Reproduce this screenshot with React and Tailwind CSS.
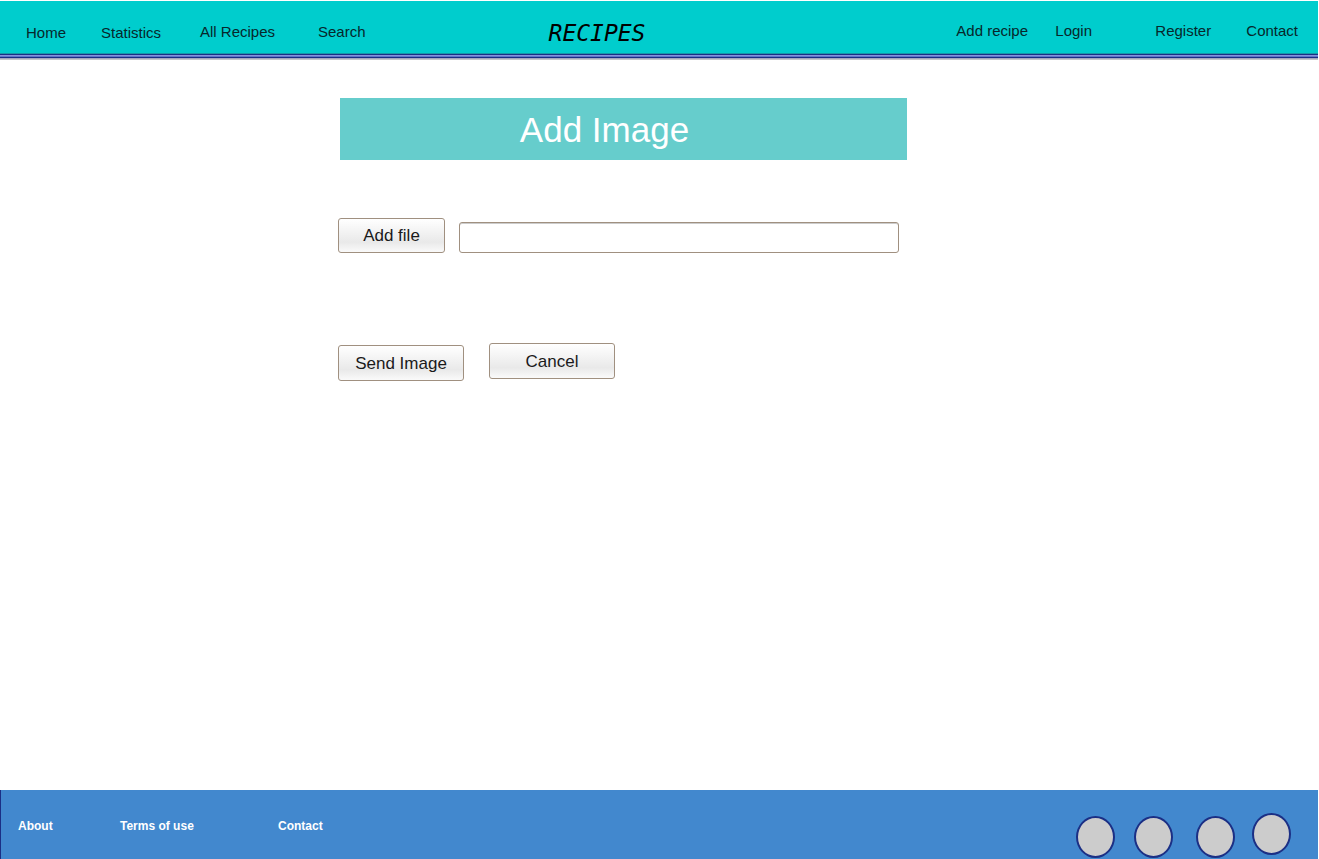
const font = '[font-family:"Liberation_Sans",Arial,sans-serif]';

const button =
  'rounded-[3px] border border-[#a09080] bg-linear-to-b from-white via-[#e9e9e9] via-70% to-[#fafafa] text-[17px] leading-5 text-[#1a1a1a]';

const circle =
  'block h-[42px] w-[39px] rounded-[50%] border-2 border-[#1b2f85] bg-[#cccccc]';

function Header() {
  return (
    <header className="mt-px pr-px">
      <div className="flex h-[52px] bg-[#00cdcd] text-[15px] leading-5 text-[#07272b]">
        <nav aria-label="Main" className="flex flex-1 items-start pt-[21px] pl-[26px]">
          <a href="#home" className="mt-px w-[75px]">Home</a>
          <a href="#statistics" className="mt-px w-[99px]">Statistics</a>
          <a href="#recipes" className="w-[118px]">All Recipes</a>
          <a href="#search">Search</a>
        </nav>
        <a
          href="#home"
          className='pt-[18px] pr-[130px] text-[23px] leading-7 text-black italic [font-family:"DejaVu_Sans_Mono",monospace]'
        >
          RECIPES
        </a>
        <nav aria-label="Account" className="flex flex-1 items-start justify-end pt-5 pr-5">
          <a href="#add" className="w-[99px]">Add recipe</a>
          <a href="#login" className="w-[100px]">Login</a>
          <a href="#register" className="w-[91px]">Register</a>
          <a href="#contact">Contact</a>
        </nav>
      </div>
      <div className="h-px bg-[#1599a8]" />
      <div className="h-px bg-[#1b2f85]" />
      <div className="h-px bg-[#8593dc]" />
      <div className="h-px bg-[#6076c8]" />
      <div className="h-px bg-[#1b2f85]" />
      <div className="h-px bg-[#a3a5bd]" />
      <div className="h-px bg-[#c4c6c8]" />
    </header>
  );
}

function Footer() {
  return (
    <footer className="mr-px flex h-[69px] justify-between border-l border-[#1b2f85] bg-[#4288ce]">
      <nav aria-label="Footer" className="flex pt-[26px] pl-[17px] text-xs leading-5 font-bold text-white">
        <a href="#about" className="w-[102px]">About</a>
        <a href="#terms" className="w-[158px]">Terms of use</a>
        <a href="#contact">Contact</a>
      </nav>
      <div className="flex items-start pt-[23px] pr-[27px]">
        <a href="#social-1" aria-label="Social link 1" className={`${circle} mt-[3px] mr-[19px]`} />
        <a href="#social-2" aria-label="Social link 2" className={`${circle} mt-[3px] mr-[23px]`} />
        <a href="#social-3" aria-label="Social link 3" className={`${circle} mt-[3px] mr-[17px]`} />
        <a href="#social-4" aria-label="Social link 4" className={circle} />
      </div>
    </footer>
  );
}

export default function App() {
  return (
    <div className={`${font} flex min-h-screen flex-col bg-white`}>
      <Header />
      <main className="flex flex-1 justify-center pt-[38px] pr-[74px]">
        <div className="w-[569px]">
          <h1 className="ml-0.5 h-[62px] bg-[#66cdcc] pr-[38px] text-center text-[35px] leading-[64px] text-white">
            Add Image
          </h1>
          <form onSubmit={(e) => e.preventDefault()}>
            <div className="mt-[58px] flex items-start">
              <button type="button" className={`${button} h-[35px] w-[107px]`}>Add file</button>
              <input
                type="text"
                aria-label="File"
                className="mt-1 ml-3.5 h-[31px] w-[440px] rounded-[3px] border border-[#a09080] px-2 text-[17px] inset-shadow-2xs inset-shadow-black/20"
              />
            </div>
            <div className="mt-[90px] flex items-start">
              <button type="submit" className={`${button} mt-0.5 h-9 w-[126px] pt-0.5`}>Send Image</button>
              <button type="button" className={`${button} ml-[25px] h-9 w-[126px] pt-0.5`}>Cancel</button>
            </div>
          </form>
        </div>
      </main>
      <Footer />
    </div>
  );
}
